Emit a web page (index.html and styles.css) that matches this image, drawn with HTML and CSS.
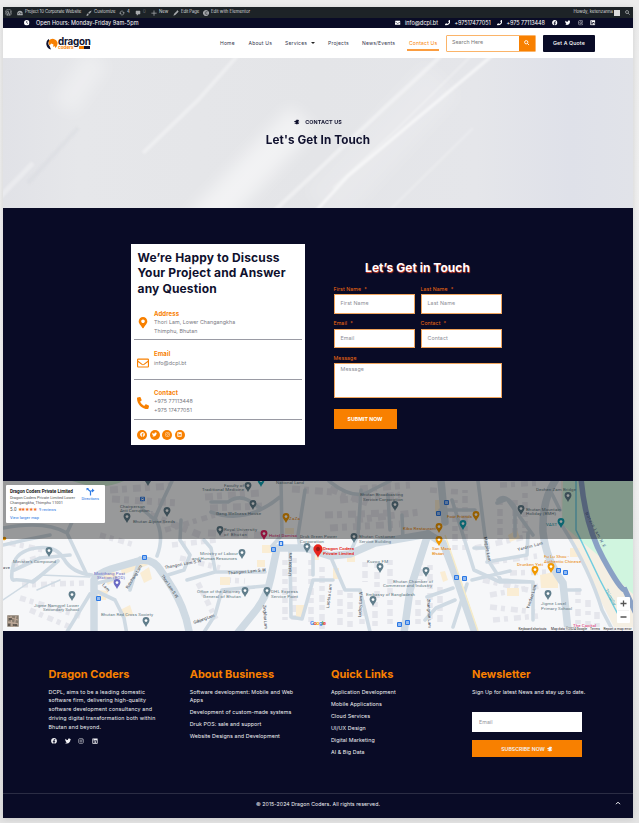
FILE: index.html
```html
<!DOCTYPE html>
<html lang="en">
<head>
<meta charset="utf-8">
<title>Contact Us - Dragon Coders</title>
<link rel="stylesheet" href="styles.css">
</head>
<body>
<svg class="sprite" xmlns="http://www.w3.org/2000/svg">
<symbol id="fb" viewBox="0 0 512 512"><path d="M504 256C504 119 393 8 256 8S8 119 8 256c0 123.78 90.69 226.38 209.25 245V327.69h-63V256h63v-54.64c0-62.15 37-96.48 93.67-96.48 27.14 0 55.52 4.84 55.52 4.84v61h-31.28c-30.8 0-40.41 19.12-40.41 38.73V256h68.78l-11 71.69h-57.78V501C413.31 482.38 504 379.78 504 256z"/></symbol>
<symbol id="tw" viewBox="0 0 512 512"><path d="M459.37 151.716c.325 4.548.325 9.097.325 13.645 0 138.72-105.583 298.558-298.558 298.558-59.452 0-114.68-17.219-161.137-47.106 8.447.974 16.568 1.299 25.34 1.299 49.055 0 94.213-16.568 130.274-44.832-46.132-.975-84.792-31.188-98.112-72.772 6.498.974 12.995 1.624 19.818 1.624 9.421 0 18.843-1.3 27.614-3.573-48.081-9.747-84.143-51.98-84.143-102.985v-1.299c13.969 7.797 30.214 12.67 47.431 13.319-28.264-18.843-46.781-51.005-46.781-87.391 0-19.492 5.197-37.36 14.294-52.954 51.655 63.675 129.3 105.258 216.365 109.807-1.624-7.797-2.599-15.918-2.599-24.04 0-57.828 46.782-104.934 104.934-104.934 30.213 0 57.502 12.67 76.67 33.137 23.715-4.548 46.456-13.32 66.599-25.34-7.798 24.366-24.366 44.833-46.132 57.827 21.117-2.273 41.584-8.122 60.426-16.243-14.292 20.791-32.161 39.308-52.628 54.253z"/></symbol>
<symbol id="ig" viewBox="0 0 512 512"><g fill="none" stroke="currentColor" stroke-width="42"><rect x="50" y="50" width="412" height="412" rx="110"/><circle cx="256" cy="256" r="94"/></g><circle cx="375" cy="137" r="28"/></symbol>
<symbol id="li" viewBox="0 0 448 512"><path d="M416 32H31.9C14.3 32 0 46.5 0 64.3v383.4C0 465.5 14.3 480 31.9 480H416c17.6 0 32-14.5 32-32.3V64.3c0-17.8-14.4-32.3-32-32.3zM135.4 416H69V202.2h66.5V416zm-33.2-243c-21.3 0-38.5-17.3-38.5-38.5S80.9 96 102.2 96c21.2 0 38.5 17.3 38.5 38.5 0 21.3-17.2 38.5-38.5 38.5zm282.1 243h-66.4V312c0-24.8-.5-56.7-34.5-56.7-34.6 0-39.9 27-39.9 54.9V416h-66.4V202.2h63.7v29.2h.9c8.9-16.8 30.6-34.5 62.9-34.5 67.2 0 79.7 44.3 79.7 101.9V416z"/></symbol>
<symbol id="phone" viewBox="0 0 512 512"><path d="M493.4 24.6l-104-24c-11.3-2.6-22.9 3.3-27.5 13.9l-48 112c-4.2 9.8-1.4 21.3 6.9 28l60.6 49.6c-36 76.7-98.9 140.5-177.2 177.2l-49.6-60.6c-6.8-8.3-18.2-11.1-28-6.9l-112 48C3.9 366.5-2 378.1.6 389.4l24 104C27.1 504.2 36.7 512 48 512c256.1 0 464-207.5 464-464 0-11.2-7.7-20.9-18.6-23.4z"/></symbol>
<symbol id="phone-alt" viewBox="0 0 512 512"><path d="M497.39 361.8l-112-48a24 24 0 0 0-28 6.9l-49.6 60.6A370.66 370.66 0 0 1 130.6 204.11l60.6-49.6a23.94 23.94 0 0 0 6.9-28l-48-112A24.16 24.16 0 0 0 122.6.61l-104 24A24 24 0 0 0 0 48c0 256.5 207.9 464 464 464a24 24 0 0 0 23.4-18.6l24-104a24.29 24.29 0 0 0-14.01-27.6z"/></symbol>
<symbol id="marker" viewBox="0 0 384 512"><path d="M172.268 501.67C26.97 291.031 0 269.413 0 192 0 85.961 85.961 0 192 0s192 85.961 192 192c0 77.413-26.97 99.031-172.268 309.67-9.535 13.774-29.93 13.773-39.464 0zM192 272c44.183 0 80-35.817 80-80s-35.817-80-80-80-80 35.817-80 80 35.817 80 80 80z"/></symbol>
<symbol id="mail" viewBox="0 0 512 512"><path d="M48 64h416a48 48 0 0 1 48 48v20L256 300 0 132v-20a48 48 0 0 1 48-48zM0 185v215a48 48 0 0 0 48 48h416a48 48 0 0 0 48-48V185L256 350z"/></symbol>
<symbol id="mail-o" viewBox="0 0 512 512"><g fill="none" stroke="currentColor" stroke-width="48" stroke-linejoin="round"><rect x="24" y="88" width="464" height="336" rx="28"/><path d="M24 170l190 145q42 30 84 0l190-145"/></g></symbol>
<symbol id="search" viewBox="0 0 16 16"><g fill="none" stroke="currentColor" stroke-width="2.6"><circle cx="6.5" cy="6.5" r="4.8"/><path d="M10 10l5 5"/></g></symbol>
<symbol id="clock" viewBox="0 0 16 16"><circle cx="8" cy="8" r="8"/><path d="M8 3v5l3 2.5" fill="none" stroke="#090b28" stroke-width="2"/></symbol>
<symbol id="wp" viewBox="0 0 16 16"><g fill="none" stroke="currentColor"><circle cx="8" cy="8" r="7.3" stroke-width="1.2"/><path d="M2.5 5l3.4 9L8 7M6 5l4.2 9L13 5M5 5h4" stroke-width="1.6"/></g></symbol>
<symbol id="dash" viewBox="0 0 16 16"><path fill-rule="evenodd" d="M1 14C-1 7 3 2 8 2s9 5 7 12zM7 10l2 1 2-6zM3 8h2v2H3zM5 5h2v2H5zM12 8h2v2h-2z"/></symbol>
<symbol id="brush" viewBox="0 0 16 16"><path d="M15 1c-4 1-8 4-9 7l2 2c4-2 6-5 7-9zM5 9c-3 0-2 4-5 5 3 2 7 1 7-3z"/></symbol>
<symbol id="update" viewBox="0 0 16 16"><g fill="none" stroke="currentColor" stroke-width="1.8"><path d="M3 7a5 5 0 0 1 9-2M13 9a5 5 0 0 1-9 2"/></g><path d="M9 6h6l-2 4zM1 10l2-4 4 4z"/></symbol>
<symbol id="comment" viewBox="0 0 16 16"><path d="M3 2h10q1 0 1 1v7q0 1-1 1H9l-4 4v-4H3q-1 0-1-1V3q0-1 1-1z"/></symbol>
<symbol id="plus" viewBox="0 0 16 16"><path d="M7 1h2v6h6v2H9v6H7V9H1V7h6z"/></symbol>
<symbol id="pencil" viewBox="0 0 16 16"><path d="M11 2l3 3-8 8-5 2 2-5zM10 1l1-1 4 4-1 1z"/></symbol>
<symbol id="elem" viewBox="0 0 16 16"><path fill-rule="evenodd" d="M8 0a8 8 0 1 0 .01 0zM5 4h1.6v8H5zM8 4h4v1.5H8zM8 7.2h4v1.5H8zM8 10.500h4V12H8z"/></symbol>
<symbol id="horn" viewBox="0 0 18 16"><path d="M7 1h6v2h2v2h-2v2h3v2h-3v2h2v2h-4v2H6v-2H2v-3h3V8H1V5h4V3h2z"/></symbol>
<symbol id="pin" viewBox="0 0 12 16"><path d="M6 0a5.500 5.500 0 0 1 5.500 5.500C11.500 9 8 11 6 16 4 11 .5 9 .5 5.500A5.500 5.500 0 0 1 6 0z"/><circle cx="6" cy="5.600" r="2.200" fill="#fff"/></symbol>
<symbol id="bus" viewBox="0 0 10 10"><rect width="10" height="10" rx="2" fill="#2b78e4"/><path d="M3 2h4v5H3zM3 7h1v1H3zM6 7h1v1H6z" fill="#fff"/><path d="M3.700 3h2.600v2H3.700z" fill="#2b78e4"/></symbol>
</svg>

<div class="page">
  <div class="admin">
    <svg><use href="#wp"/></svg>
    <span class="ad w1"><svg><use href="#dash"/></svg>Project 10 Corporate Website</span>
    <span class="ad w2"><svg><use href="#brush"/></svg>Customize</span>
    <span class="ad w3"><svg><use href="#update"/></svg>4</span>
    <span class="ad w4"><svg><use href="#comment"/></svg>0</span>
    <span class="ad w5"><svg><use href="#plus"/></svg>New</span>
    <span class="ad w6"><svg><use href="#pencil"/></svg>Edit Page</span>
    <span class="ad"><svg><use href="#elem"/></svg>Edit with Elementor</span>
    <span class="howdy">Howdy, ketenzanna</span><i class="avatar"></i>
    <svg class="asearch"><use href="#search"/></svg>
  </div>

  <div class="topbar">
    <svg><use href="#clock"/></svg><span class="hours">Open Hours: Monday-Friday 9am-5pm</span>
    <div class="topright">
      <svg><use href="#mail"/></svg><span class="t1">info@dcpl.bt</span>
      <svg><use href="#phone"/></svg><span class="t2">+97517477051</span>
      <svg><use href="#phone"/></svg><span class="t3">+975 77113448</span>
      <div class="social top"><svg><use href="#fb"/></svg><svg><use href="#tw"/></svg><svg><use href="#ig"/></svg><svg><use href="#li"/></svg></div>
    </div>
  </div>

  <header class="nav">
    <div class="logo">
      <svg class="mark" viewBox="0 0 12 13"><path d="M5 12.500A6 6 0 0 1 2.500 2l1.200 1.400A4 4 0 0 0 3.600 9z" fill="#11132e"/><path d="M3 3.500A5 5 0 0 1 11.500 5.500c.3 2-.5 4-2 5.500l-1-2-1.500 1 .5-2.500L5.200 6.500 3.600 8.500C2.500 7 2.400 5 3 3.500z" fill="#f88000"/></svg>
      <div class="word"><b>dragon</b><div class="sub"><span>coders</span><i></i></div></div>
    </div>
    <nav class="menu">
      <a class="m1">Home</a><a class="m2">About Us</a><a class="m3">Services<i class="caret"></i></a><a class="m4">Projects</a><a class="m5">News/Events</a><a class="m6">Contact Us</a>
    </nav>
    <div class="searchbox"><span>Search Here</span><b><svg><use href="#search"/></svg></b></div>
    <a class="quote">Get A Quote</a>
  </header>

  <section class="hero">
    <svg class="rays" viewBox="0 0 630 150" preserveAspectRatio="none">
      <defs><filter id="s" x="-20%" y="-20%" width="140%" height="140%"><feGaussianBlur stdDeviation="1.2"/></filter><filter id="m" x="-30%" y="-30%" width="160%" height="160%"><feGaussianBlur stdDeviation="8"/></filter></defs>
      <g fill="none" stroke="#fff">
        <g filter="url(#m)"><path d="M195 170L300 60" stroke-width="34" opacity=".5"/><path d="M60 50L95 0" stroke-width="26" opacity=".3"/><path d="M320 150L440 20" stroke-width="50" opacity=".15"/></g>
        <g filter="url(#s)"><path d="M491-4L345 118 312 154" stroke-width="3" opacity=".6"/><path d="M440-4L388 44 270 154" stroke-width="4" opacity=".4"/><path d="M470-4L395 70 330 130" stroke-width="2" opacity=".3"/><path d="M236-4L195 42 140 95" stroke-width="4" opacity=".35"/><path d="M-4 140L30 105" stroke-width="5" opacity=".3"/><path d="M470 70L385 154" stroke-width="3" opacity=".2"/></g>
        <g filter="url(#s)" stroke="#c9cbd4"><path d="M25 125L75 70" stroke-width="4" opacity=".2"/></g>
      </g>
    </svg>
    <p class="crumb"><svg><use href="#horn"/></svg>CONTACT US</p>
    <h1>Let's Get In Touch</h1>
  </section>

  <section class="contact">
    <div class="card">
      <h2>We’re Happy to Discuss<br>Your Project and Answer<br>any Question</h2>
      <div class="info i1"><svg class="mk"><use href="#marker"/></svg><div><h3>Address</h3><p>Thori Lam, Lower Changangkha</p><p>Thimphu, Bhutan</p></div></div>
      <div class="info i2"><svg><use href="#mail-o"/></svg><div><h3>Email</h3><p>info@dcpl.bt</p></div></div>
      <div class="info i3"><svg><use href="#phone-alt"/></svg><div><h3>Contact</h3><p>+975 77113448</p><p>+975 17477051</p></div></div>
      <div class="round"><i><svg><use href="#fb"/></svg></i><i><svg><use href="#tw"/></svg></i><i><svg><use href="#ig"/></svg></i><i><svg><use href="#li"/></svg></i></div>
    </div>
    <form class="form">
      <h2>Let’s Get in Touch</h2>
      <div class="fields">
        <label>First Name &nbsp;*<span class="field">First Name</span></label>
        <label>Last Name &nbsp;*<span class="field">Last Name</span></label>
        <label>Email &nbsp;*<span class="field">Email</span></label>
        <label>Contact &nbsp;*<span class="field">Contact</span></label>
        <label class="full">Message<span class="field area">Message</span></label>
      </div>
      <a class="submit">SUBMIT NOW</a>
    </form>
  </section>

  <section class="map">
    <svg class="mapsvg" viewBox="3 481 630 150">
      <rect x="3" y="481" width="630" height="150" fill="#f6f7f9"/>
      <path d="M561 481H633V631H616L590 580 562 524z" fill="#f5efe3"/>
      <path d="M563 481H633V594L618 580 605 561 581 541 562 524z" fill="#d0f5df"/>
      <path d="M72 481h52q-18 8-38 4z" fill="#cbe8d0"/>
      <g fill="none" stroke="#e5e6ec" stroke-width="5.500">
        <path d="M10 543l38 8M12 565l28 -8M22 585l62 -2M20 598l60 18M30 610l40 17M100 535l35 10M165 530l50 -15M172 545l45 -5M180 558l40 10M198 583l18 36M225 580l20 1M225 592l25 -4" stroke-dasharray="6 4 4 5"/>
        <path d="M110 490l60 -4M112 499l66 4M150 515l50 20M205 497l55 -4M210 508l52 -2M208 533l55 2M292 489l40 3M330 489l40 15M340 500l60 -5M325 515l66 -2M330 528l70 -4M355 520l65 -8M360 489l50 -4" stroke-width="7" stroke-dasharray="8 4 5 6"/>
        <path d="M285 560v60M294 558v64M311 560v66M322 567v62M340 590v38M350 593v34M365 562v20M377 563v35M390 560v34M362 600v24M375 602v24M390 600v28M420 560v20M418 600v25M430 565v57M440 587v36M455 550v-50M465 550v-60M500 500v40M515 500v36M525 493v40" stroke-dasharray="5 4 7 3"/>
        <path d="M475 548l55 -12M483 580l45 10M490 595l50 -9M490 607l45 5M493 620l45 -4M492 562l45 -6M510 573l38 -1M578 588v38M588 600v25M597 612v15M430 490l30 2M500 485l40 -2" stroke-dasharray="7 4 4 6"/>
      </g>
      <g fill="#faedd4">
        <path d="M120 565l25-6 3 6-26 10zM102 575l12-4 4 8-10 6zM140 573l9-6 3 12-8 4zM98 590l10 1-2 9h-9zM120 610l10-5 3 9-9 4zM262 545h12v8h-12zM257 560h8v7h-8zM220 577h10v8h-10zM285 528h9v6h-9zM296 605h8v13h-8zM313 551h6v9h-6zM333 568h6v11h-6zM347 553h8v9h-8zM540 575l18-4v17h-17zM508 535l9-5 3 8-10 4zM440 572l5-1 3 9-5 2zM435 500h8v14h-8zM507 588h12v8h-12zM570 548h10v9h-10z"/>
      </g>
      <g fill="none" stroke="#cfdae3" stroke-linecap="round" stroke-linejoin="round">
        <g stroke-width="7.500">
          <path d="M94 640V580Q96 574 111 569L135 562Q152 556 161 571Q175 590 182 607T190 640"/>
          <path d="M232 640L253 614Q267 598 271 577L277 548H305L330 556 350 554 375 543 393 540 428 534"/>
          <path d="M428 534L443 543 457 580 474 630M441 481L445 522M428 534L410 590 403 640M555 481Q542 500 543 532Q546 560 563 583L569 640"/>
        </g>
        <g stroke-width="3.600">
          <path d="M3 528Q45 520 67 533L86 573M67 533L72 522M3 545L25 540 50 535M12 571L40 558 70 555M92 575Q72 573 64 559T36 548 13 566 14 580 33 582L58 561M94 590L115 600 124 618 128 640M98 583L114 579M62 640L90 594M140 558L130 590M157 556Q165 535 155 518L163 500 172 481M155 520L142 509M168 575L184 570 190 555 180 540 181 520M187 580L215 572 265 572M215 570L211 548 204 540M199 640L215 615 222 590 265 586M272 546L282 535 281 481M211 502H228Q238 495 248 500L260 508M300 548L298 535 305 490M290 551L291 617 302 619 306 605 313 580H333M332 560L345 590H360L372 640M313 575V550M350 553L358 535 361 490M329 481Q355 502 372 490L390 481M211 512Q246 525 280 497M388 495L390 530M403 540L402 515M440 510H475M452 500L474 570 500 582H533M487 562L527 555 528 533M497 503L507 499 533 535M498 500Q505 493 515 507V536M474 548H488M478 481L488 560 501 580 533 582V620M427 597L453 588M425 620L436 608 455 600M467 584L453 627M560 510L550 490M563 527Q590 570 602 610L613 631M562 590H580M472 580L510 571"/>
        </g>
        <path stroke-width="1.500" d="M3 600L40 575 90 577M37 590L60 580"/>
      </g>
      <path d="M445 535L478 631" fill="none" stroke="#f7ecc8" stroke-width="1.500"/>
      <path d="M576 481V530L600 580 622 622" fill="none" stroke="#72cde0" stroke-width="1.500"/>
      <path d="M581 478Q585 525 603 558T625 590L638 618" fill="none" stroke="#8aa1c5" stroke-width="5.500"/>
      <g class="street">
        <text transform="translate(165 569) rotate(-11)" textLength="37">Thangori Lam S.W</text>
        <text transform="translate(228 574.500) rotate(-5)" textLength="38">Thangori Lam S W</text>
        <text transform="translate(161 576) rotate(56)" textLength="27">Thori Lam S.W</text>
        <text transform="translate(102 585) rotate(50)" textLength="9">Lam</text>
        <text transform="translate(128 589) rotate(-58)" textLength="27">Rubchang Lam</text>
        <text transform="translate(194 624) rotate(-20)" textLength="22">Gabjang Lam</text>
        <text transform="translate(291 576) rotate(-88)" textLength="23">Lhaksor Lam</text>
        <text transform="translate(263 605) rotate(86)" textLength="24">Zingkhar Lam</text>
        <text transform="translate(329 608) rotate(-83)" textLength="24">Laptsa Lam</text>
        <text transform="translate(361 617) rotate(-87)" textLength="25">Ludroy Lam A</text>
        <text transform="translate(427 599) rotate(87)" textLength="29">Zhangmin Lam</text>
        <text transform="translate(484 537) rotate(80)" textLength="25">Magpie Lam</text>
        <text transform="translate(518 551) rotate(-15)" textLength="26">Yardrin Lam</text>
        <text transform="translate(529 609) rotate(-72)" textLength="25">Yanden Lam</text>
        <text transform="translate(585 513) rotate(62)" textLength="39" fill="#465a86">Norzin Lam N.E</text>
        <text transform="translate(605 590) rotate(60)" textLength="18" fill="#1594ae">Thimphu</text>
        <text x="3" y="569" textLength="7">ave</text>
      </g>
      <g class="place">
        <text x="13" y="562.500" textLength="43">Minister's Compound</text>
        <text x="34" y="606.500" textLength="45">Jigme Namgyel Lower</text><text x="43" y="611" textLength="36">Secondary School</text>
        <text x="101" y="616" textLength="52">Bhutan Red Cross Society</text>
        <g fill="#6c6bc4"><text x="94" y="574.500" textLength="31">Motithang Post</text><text x="97" y="579" textLength="28">Station (BOD)</text></g>
        <text x="120" y="507.500" textLength="25">Chairperson</text><text x="120" y="512" textLength="33">Anti Corruption...</text>
        <text x="133" y="522.500" textLength="42">Bhutan Alpine Seeds</text>
        <text x="202" y="491" textLength="42">Traditional Medicine</text><text x="224" y="486.500" textLength="20">Faculty of</text>
        <text x="276" y="484" textLength="28">National Land</text>
        <text x="216" y="515" textLength="45">Gang Wellness House</text>
        <text x="224" y="531" textLength="33">Royal University</text><text x="224" y="535.500" textLength="23">of Bhutan</text>
        <text x="300" y="538" textLength="37">Druk Green Power</text><text x="300" y="542.500" textLength="24">Corporation</text>
        <text x="360" y="496" textLength="43">Bhutan Broadcasting</text><text x="363" y="500.500" textLength="40">Service Corporation</text>
        <text x="359" y="538" textLength="36">Bhutan Customer</text><text x="359" y="542.500" textLength="32">Service Building</text>
        <text x="200" y="555" textLength="38">Ministry of Labour</text><text x="192" y="559.500" textLength="45">and Human Resources</text>
        <text x="197" y="593" textLength="43">Office of the Attorney</text><text x="203" y="597.500" textLength="38">General of Bhutan</text>
        <text x="271" y="593" textLength="27">DHL Express</text><text x="271" y="597.500" textLength="27">Service Point</text>
        <text x="367" y="563" textLength="21">Kuzoo FM</text>
        <text x="393" y="582.500" textLength="40">Bhutan Chamber of</text><text x="383" y="587" textLength="49">Commerce and Industry</text>
        <text x="366" y="596" textLength="49">Embassy of Bangladesh</text>
        <text x="536" y="491" textLength="40">Dechen Zam Bridge</text>
        <text x="526" y="510.500" textLength="35">Bhutan Mountain</text><text x="526" y="515" textLength="30">Holiday (BMH)</text>
        <text x="541" y="605" textLength="25">Jigme Losel</text><text x="541" y="609.500" textLength="31">Primary School</text>
        <g fill="#e98300"><text x="289" y="520" textLength="11">ZaZa</text><text x="403" y="530" textLength="33">Kibo Restaurant</text><text x="447" y="518" textLength="25">Four Friends</text><text x="432" y="550" textLength="19">San Maru</text><text x="432" y="554.500" textLength="12">Bhutan</text><text x="517" y="565.500" textLength="26">Drunken Yeti</text><text x="544" y="558" textLength="25">Fu Lu Shou -</text><text x="544" y="562.500" textLength="37">Authentic Chinese</text></g>
        <g fill="#d8286b"><text x="269" y="537" textLength="28">Hotel Damisa</text><text x="573" y="627" textLength="23">The Capital</text></g>
        <text x="546" y="525.500" textLength="11" fill="#1195a6">VAST</text>
        <g fill="#e42a24" stroke="#e42a24" stroke-width=".15"><text x="323" y="550" textLength="31">Dragon Coders</text><text x="323" y="555" textLength="31">Private Limited</text></g>
      </g>
      <g fill="#607d8b">
        <use href="#pin" x="45" y="547" width="8" height="10"/><use href="#pin" x="68" y="591" width="8" height="10"/><use href="#pin" x="142" y="617" width="8" height="10"/><use href="#pin" x="123" y="513" width="8" height="10"/><use href="#pin" x="163" y="507" width="8" height="10"/><use href="#pin" x="144" y="476" width="8" height="10"/><use href="#pin" x="244" y="482" width="8" height="10"/><use href="#pin" x="249" y="500" width="8" height="10"/><use href="#pin" x="216" y="526" width="8" height="10"/><use href="#pin" x="238" y="549" width="8" height="10"/><use href="#pin" x="241" y="587" width="8" height="10"/><use href="#pin" x="263" y="587" width="8" height="10"/><use href="#pin" x="303" y="543" width="8" height="10"/><use href="#pin" x="350" y="533" width="8" height="10"/><use href="#pin" x="391" y="501" width="8" height="10"/><use href="#pin" x="376" y="563" width="8" height="10"/><use href="#pin" x="369" y="596" width="8" height="10"/><use href="#pin" x="422" y="567" width="8" height="10"/><use href="#pin" x="517" y="505" width="8" height="10"/><use href="#pin" x="544" y="590" width="8" height="10"/><use href="#pin" x="564" y="492" width="8" height="10"/>
      </g>
      <use href="#pin" x="113" y="579" width="8" height="10" fill="#6c6bc4"/>
      <g fill="#f29900"><use href="#pin" x="282" y="513" width="8" height="10"/><use href="#pin" x="472" y="511" width="8" height="10"/><use href="#pin" x="435" y="523" width="8" height="10"/><use href="#pin" x="435" y="536" width="8" height="10"/><use href="#pin" x="531" y="566" width="8" height="10"/><use href="#pin" x="547" y="563" width="8" height="10"/></g>
      <use href="#pin" x="260" y="530" width="8" height="10" fill="#e91e63"/>
      <g fill="#12a4b5"><use href="#pin" x="459" y="520" width="8" height="10"/><use href="#pin" x="557" y="518" width="8" height="10"/><use href="#pin" x="257" y="477" width="8" height="10"/></g>
      <use href="#pin" x="313" y="544" width="10" height="14" fill="#e8241c"/><circle cx="318" cy="549" r="2.200" fill="#a01713"/>
      <use href="#bus" x="140" y="496.500" width="5" height="5"/><use href="#bus" x="142" y="555" width="5" height="5"/><use href="#bus" x="96" y="596" width="5" height="5"/><use href="#bus" x="278.500" y="541" width="5" height="5"/><use href="#bus" x="271" y="547" width="5" height="5"/><use href="#bus" x="397" y="622" width="5" height="5"/><use href="#bus" x="405" y="620" width="5" height="5"/><use href="#bus" x="444" y="500" width="5" height="5"/><use href="#bus" x="436" y="511" width="5" height="5"/><use href="#bus" x="454" y="575" width="5" height="5"/><use href="#bus" x="462" y="576" width="5" height="5"/><use href="#bus" x="556" y="568" width="5" height="5"/><use href="#bus" x="563" y="570" width="5" height="5"/>
      <circle cx="4.500" cy="538.500" r="1.800" fill="#f29900"/>
      <text x="310" y="624.500" font-size="6" font-weight="700" textLength="16"><tspan fill="#4285f4">G</tspan><tspan fill="#ea4335">o</tspan><tspan fill="#fbbc05">o</tspan><tspan fill="#4285f4">g</tspan><tspan fill="#34a853">l</tspan><tspan fill="#ea4335">e</tspan></text>
      <rect x="517" y="627" width="116" height="4" fill="#f6f7f9" opacity=".7"/>
      <g font-size="3.300" fill="#222"><text x="518.500" y="630" textLength="28">Keyboard shortcuts</text><text x="551" y="630" textLength="36">Map data ©2024 Google</text><text x="590" y="630" textLength="10">Terms</text><text x="603.500" y="630" textLength="28">Report a map error</text></g>
      <rect x="3" y="481" width="630" height="58" opacity=".38"/>
      <rect x="7" y="615" width="12" height="12" fill="#887d70" stroke="#fff" stroke-width=".5"/><path d="M8 617l10 3M8 622l10 2M11 616l1 11M16 616l-2 11" stroke="#bda898" stroke-width="1.300"/><path d="M9 619h3M13 625h4M8 625h2" stroke="#4f4a44" stroke-width="1.500"/>
      <rect x="617" y="597" width="13" height="26" rx="1" fill="#fff"/><path d="M618 610.500h11" stroke="#e6e6e6" stroke-width=".5"/><path d="M620.500 603.500h6M623.500 600.500v6M620.500 617h6" stroke="#555" stroke-width="1.300"/>
      <rect x="6" y="485" width="99" height="38" rx="1" fill="#fff"/>
      <text x="10" y="492.500" font-size="4.700" font-weight="700" fill="#222" textLength="63">Dragon Coders Private Limited</text>
      <g font-size="4" fill="#555"><text x="10" y="499" textLength="65">Dragon Coders Private Limited Lower</text><text x="10" y="503.500" textLength="53">Changangkha, Thimphu 11001</text><text x="10" y="511" textLength="6.500" font-size="4.500">5.0</text></g>
      <text x="17.500" y="511.300" font-size="5" fill="#f0701c" textLength="19">★★★★★</text>
      <g font-size="3.900" fill="#2272df"><text x="39" y="511" textLength="17">9 reviews</text><text x="10" y="519" textLength="29">View larger map</text><text x="81.500" y="500.300" textLength="17.500">Directions</text></g>
      <path d="M90.500 495.500v-4l-3-2.500M90.500 492q0-1.500 2.500-1.500" fill="none" stroke="#2c7be5" stroke-width="1.200"/><path d="M92 488.500l2.500 2-2.500 2zM86.500 488h2.500l-2.500 2.500z" fill="#2c7be5"/>
    </svg>
  </section>

  <footer>
    <div class="cols">
      <div class="c1"><h4>Dragon Coders</h4><p>DCPL, aims to be a leading domestic<br>software firm, delivering high-quality<br>software development consultancy and<br>driving digital transformation both within<br>Bhutan and beyond.</p>
        <div class="social foot"><svg><use href="#fb"/></svg><svg><use href="#tw"/></svg><svg><use href="#ig"/></svg><svg><use href="#li"/></svg></div></div>
      <div class="c2"><h4>About Business</h4><ul><li>Software development: Mobile and Web<br>Apps</li><li>Development of custom-made systems</li><li>Druk POS: sale and support</li><li>Website Designs and Development</li></ul></div>
      <div class="c3"><h4>Quick Links</h4><ul><li>Application Development</li><li>Mobile Applications</li><li>Cloud Services</li><li>UI/UX Design</li><li>Digital Marketing</li><li>AI &amp; Big Data</li></ul></div>
      <div class="c4"><h4>Newsletter</h4><p>Sign Up for latest News and stay up to date.</p><span class="nl">Email</span><a class="sub-btn">SUBSCRIBE NOW <svg><use href="#horn"/></svg></a></div>
    </div>
    <div class="copy"><span>© 2015-2024 Dragon Coders. All rights reserved.</span><svg class="up" viewBox="0 0 6 4"><path d="M1 3.200l2-2 2 2" fill="none" stroke="#fff" stroke-width="1"/></svg></div>
  </footer>
</div>
</body>
</html>
```
FILE: styles.css
```css
* { box-sizing: border-box; margin: 0; padding: 0; }
body {
  width: 639px; height: 823px; padding: 7px 0 0 3px; overflow: hidden;
  background: linear-gradient(#ececec, #f3f3f3 50%, #e3e3e3);
  font: 5px/1.6 Inter, "Liberation Sans", sans-serif;
}
svg { fill: currentColor; flex: none; }
i { font-style: normal; }
.sprite { position: absolute; width: 0; height: 0; }
.page { width: 630px; height: 811px; background: #090b26; box-shadow: 0 1px 6px rgba(0,0,0,.12); }

.admin { height: 11px; background: #1d2327; color: #d6d8da; display: flex; align-items: center; padding-left: 2px; font-size: 4.3px; white-space: nowrap; }
.admin svg { width: 7px; height: 7px; color: #a7aaad; }
.ad { display: flex; align-items: center; gap: 2px; }
.ad svg { width: 6px; height: 6px; }
.w1 { margin-left: 5px; width: 69px; letter-spacing: -.11px; }
.w2 { width: 33px; }
.w3 { width: 16px; }
.w4 { width: 16px; color: #6c7075; }
.w5 { width: 22px; }
.w6 { width: 30px; letter-spacing: -.1px; }
.howdy { margin-left: auto; letter-spacing: -.02px; }
.avatar { width: 6px; height: 6px; background: #dcdcdc; margin: 0 5px 0 1px; }
.admin .asearch { width: 5px; height: 5px; margin-right: 3px; }

.topbar { height: 10px; color: #fff; display: flex; align-items: center; padding-left: 21px; font-size: 5.5px; white-space: nowrap; }
.topbar svg { width: 5.5px; height: 5.5px; }
.hours { margin-left: 6.5px; letter-spacing: .06px; }
.topright { margin-left: auto; display: flex; align-items: center; width: 238px; }
.topright > svg { margin-right: 4.5px; }
.t1 { width: 39.500px; }
.t2 { width: 42px; letter-spacing: -.1px; }
.t3 { width: 45.500px; letter-spacing: -.1px; }
.social { display: flex; }
.top { gap: 7.300px; }

.nav { height: 30px; background: #fff; display: flex; align-items: center; padding-left: 43px; }
.logo { display: flex; width: 45px; align-items: center; }
.mark { width: 12px; height: 13px; }
.word { display: flex; flex-direction: column; margin-top: 0; width: 33px; }
.word b { font-size: 9.800px; line-height: 10px; color: #11132e; letter-spacing: -.25px; height: 9.500px; }
.sub { display: flex; color: #f88000; font-weight: 700; font-size: 4.600px; line-height: 3.500px; align-items: center; }
.sub span { width: 21px; }
.sub i { width: 11px; height: 3px; background: linear-gradient(90deg, #f88000 45%, #11132e 45%); }
.menu { display: flex; width: 230px; margin-left: 129px; color: #33354c; font-size: 5px; line-height: 8px; white-space: nowrap; }
.m1 { width: 28.500px; }
.m2 { width: 36.500px; }
.m3 { width: 43px; display: flex; align-items: center; gap: 4px; }
.caret { border: 2px solid transparent; border-top: 2.500px solid #222; border-bottom: 0; }
.m4 { width: 34px; letter-spacing: .2px; }
.m5 { width: 45px; letter-spacing: .2px; }
.m6 { position: relative; width: 32px; padding-left: 2px; color: #f88000; letter-spacing: .2px; }
.m6::after { content: ""; position: absolute; left: 0; top: 10px; width: 32px; height: 1.500px; background: #fb9d40; }
.m1, .m2, .m3 { letter-spacing: .2px; }
.searchbox { margin-left: -4px; width: 90px; height: 17px; border: 1px solid #fbb469; display: flex; justify-content: space-between; border-radius: 1px; color: #777; font-size: 5.300px; }
.searchbox span { padding: 2.500px 0 0 5px; }
.searchbox b { width: 16px; background: #f88000; display: grid; place-items: center; color: #fff; }
.searchbox svg { width: 5.500px; height: 5.500px; }
.quote { margin-left: 7px; width: 52px; height: 17px; background: #090b26; color: #fff; border-radius: 1px; display: grid; place-items: center; font-size: 5.300px; font-weight: 500; letter-spacing: .1px; }

.hero {
  position: relative; height: 150px; color: #10112e; text-align: center; padding-top: 59px;
  background: linear-gradient(90deg, #e1e2e7, #e6e7ea 12%, #e4e5e8 50%, #e5e6ea 75%, #dfe1e9 90%, #e1e3e9);
}
.rays { position: absolute; left: 0; top: 0; width: 630px; height: 150px; }
.crumb { position: relative; font-size: 5.400px; line-height: 10px; font-weight: 700; display: flex; justify-content: center; align-items: center; gap: 5px; letter-spacing: .12px; }
.crumb svg { width: 6px; height: 6px; }
.hero h1 { position: relative; font-size: 11.700px; line-height: 18px; margin-top: 4px; font-weight: 700; letter-spacing: .1px; }

.contact { height: 273px; padding: 36px 0 0 128px; display: flex; align-items: flex-start; }
.card { width: 174px; height: 201px; background: #fff; padding: 6px 3px 0; }
.card h2 { font-size: 12px; line-height: 15.300px; color: #10112e; padding-left: 3.500px; white-space: nowrap; letter-spacing: .16px; }
.info { height: 40px; border-bottom: 1px solid #9a9ba4; display: flex; color: #f88000; padding: 8px 0 0 3px; gap: 5px; }
.info svg { width: 12px; height: 12px; margin-top: 9px; }
.info .mk { height: 11.500px; }
.info h3 { font-size: 6px; line-height: 9px; height: 9px; letter-spacing: .1px; }
.info p { color: #77787f; font-size: 5.300px; line-height: 9px; letter-spacing: .05px; }
.i2 h3 { height: 10px; }
.i1 { height: 40.500px; margin-top: 4px; padding-top: 9.500px; }
.info.i2 { padding-top: 9px; }
.i2 svg { margin-top: 8px; }
.i1 svg { margin-top: 8px; }
.round { display: flex; gap: 2.500px; padding: 9.500px 0 0 3px; }
.round i { width: 10px; height: 10px; border-radius: 50%; background: #f88000; color: #fff; display: grid; place-items: center; }
.round svg { width: 5px; height: 5px; }

.form { margin: 15px 0 0 28.500px; width: 168px; }
.form h2 { text-align: center; color: #fff; font-size: 12px; line-height: 18px; text-shadow: .5px .5px 1px #e0402c; letter-spacing: .03px; }
.fields { display: grid; grid-template-columns: 81px 81px; column-gap: 6px; margin-top: 7px; }
.fields label { color: #f26a10; font-size: 5.200px; line-height: 9px; height: 34.500px; padding-top: .5px; white-space: pre; letter-spacing: .1px; }
.field { display: block; height: 19.500px; margin-top: .5px; border: 1px solid #f0a45c; background: #fff; color: #8c8d96; font-size: 5.300px; line-height: 17.500px; padding-left: 6px; }
.fields .full { grid-column: span 2; height: 45px; }
.area { height: 35px; line-height: 11px; }
.submit { display: grid; place-items: center; width: 63px; height: 20px; margin-top: 11px; background: #f88000; color: #fff; font-size: 5.200px; font-weight: 700; }

.map { height: 150px; }
.mapsvg { display: block; width: 630px; height: 150px; font-family: Roboto, "Liberation Sans", sans-serif; }
.street { font-size: 4.200px; fill: #38414a; }
.place { font-size: 4.400px; fill: #5f7782; }

footer { height: 187px; color: #f2f2f5; }
.cols { height: 162.500px; padding: 35px 0 0 45.500px; display: grid; grid-template-columns: 141.200px 141.200px 141.200px 116px; border-bottom: 1px solid #2b2d44; }
h4 { color: #f88000; font-size: 11px; line-height: 17px; margin-bottom: 4.500px; white-space: nowrap; }
.cols p { line-height: 8.750px; font-size: 5.300px; white-space: nowrap; letter-spacing: .14px; }
.cols li { list-style: none; font-size: 5.300px; line-height: 8.750px; margin-bottom: 3.250px; white-space: nowrap; letter-spacing: .1px; }
.foot { gap: 7.600px; padding: 7px 0 0 2.500px; }
.foot svg { width: 6px; height: 6px; }
.nl { display: block; width: 110px; height: 20px; margin-top: 16px; padding-left: 7px; background: #fff; color: #94959d; font-size: 5.300px; line-height: 20px; }
.c4 p { letter-spacing: .08px; }
.cols .c4 p { letter-spacing: .08px; }
.sub-btn { width: 110px; height: 17px; margin-top: 8px; background: #f88000; display: flex; justify-content: center; align-items: center; gap: 2px; font-size: 5.200px; font-weight: 600; }
.sub-btn svg { width: 6px; height: 6px; }
.copy { position: relative; height: 22px; text-align: center; font-size: 5.200px; line-height: 21px; letter-spacing: .07px; }
.up { position: absolute; right: 12px; top: 7px; width: 6px; height: 4px; }
```
